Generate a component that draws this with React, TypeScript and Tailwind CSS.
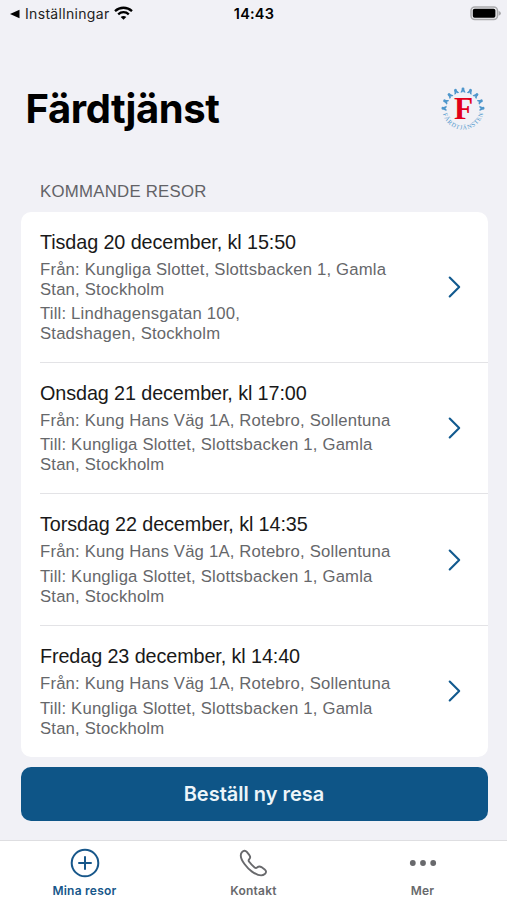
const trips = [
  {
    title: "Tisdag 20 december, kl 15:50",
    from: ["Från: Kungliga Slottet, Slottsbacken 1, Gamla", "Stan, Stockholm"],
    to: ["Till: Lindhagensgatan 100,", "Stadshagen, Stockholm"],
    size: "h-[151px]",
  },
  {
    title: "Onsdag 21 december, kl 17:00",
    from: ["Från: Kung Hans Väg 1A, Rotebro, Sollentuna"],
    to: ["Till: Kungliga Slottet, Slottsbacken 1, Gamla", "Stan, Stockholm"],
    size: "h-[131.5px]",
  },
  {
    title: "Torsdag 22 december, kl 14:35",
    from: ["Från: Kung Hans Väg 1A, Rotebro, Sollentuna"],
    to: ["Till: Kungliga Slottet, Slottsbacken 1, Gamla", "Stan, Stockholm"],
    size: "h-[132px]",
  },
  {
    title: "Fredag 23 december, kl 14:40",
    from: ["Från: Kung Hans Väg 1A, Rotebro, Sollentuna"],
    to: ["Till: Kungliga Slottet, Slottsbacken 1, Gamla", "Stan, Stockholm"],
    size: "h-[130.5px]",
  },
];

const figureAngles = [-88, -66, -44, -22, 0, 22, 44, 66, 88];

function Logo() {
  return (
    <svg width="46" height="46" viewBox="-23 -23 46 46" className="shrink-0">
      <defs>
        <path id="ring" d="M-20.6 0A20.6 20.6 0 0 0 20.6 0" />
      </defs>
      {figureAngles.map((a) => (
        <g key={a} transform={`rotate(${a}) translate(0 -19)`} fill="#4f97cc">
          <circle cy="-1.1" r="1.45" />
          <path d="M-1.1 -.8H1.1L2.6 2.5H.9L0 1.3L-.9 2.5H-2.6Z" />
        </g>
      ))}
      <text fontFamily="Liberation Serif, serif" fontSize="6.2" fill="#4f97cc">
        <textPath href="#ring" startOffset="4.8" textLength="55.2">FÄRDTJÄNSTEN</textPath>
      </text>
      <text x="0.5" y="10.2" textAnchor="middle" fontFamily="Liberation Serif, serif" fontWeight="700" fontSize="31.4" fill="#e2001a">F</text>
    </svg>
  );
}

function Chevron() {
  return (
    <svg width="14" height="22" viewBox="0 0 14 22" fill="none" stroke="#125a8f" strokeWidth="2.1" strokeLinecap="round" strokeLinejoin="round">
      <path d="M1.7 1.5L11.2 11L1.7 20.5" />
    </svg>
  );
}

export default function App() {
  return (
    <div className="flex h-[900px] w-[507px] flex-col overflow-hidden bg-[#f1f1f6] font-['Liberation_Sans',sans-serif]">
      <div className="grid h-7 shrink-0 grid-cols-3 items-center pl-2.5 pr-1.5 text-black">
        <div className="flex items-center whitespace-nowrap font-['Inter',sans-serif] text-[14px] leading-7">
          <svg width="10" height="10" viewBox="0 0 10 10"><path d="M0 5L9.5 .8V9.2Z" /></svg>
          <span className="ml-[5px] tracking-[0.32px] text-[#222]">Inställningar</span>
          <svg width="19" height="15" viewBox="0 0 19 15" className="mb-px ml-[4px]" fill="none" stroke="#000" strokeWidth="2.3">
            <path d="M1 5.1C5.9 .6 13.1 .6 18 5.1" />
            <path d="M4.2 8.3C7.2 5.5 11.8 5.5 14.8 8.3" />
            <path d="M9.5 13.8L6.7 11C8.3 9.5 10.7 9.5 12.3 11Z" fill="#000" stroke="none" />
          </svg>
        </div>
        <div className="pr-[3px] text-center font-['Inter',sans-serif] text-[14.5px] font-semibold tracking-[0.2px]">14:43</div>
        <svg width="31" height="15" viewBox="0 0 31 15" className="mb-[2px] justify-self-end">
          <rect x="1" y="1" width="26.5" height="12.6" rx="3.8" fill="#ededf0" stroke="#aaaaad" strokeWidth="1.5" />
          <rect x="2.8" y="2.8" width="22.6" height="9" rx="1.8" />
          <path d="M28.6 4.7Q31 5.7 31 7.2T28.6 9.8Z" fill="#aaaaad" />
        </svg>
      </div>

      <header className="flex h-[144px] shrink-0 items-center justify-between pl-[25.5px] pr-[21px] pb-[3px] pt-[21px]">
        <h1 className="font-['Inter',sans-serif] text-[40px] font-bold leading-[48px] tracking-[-0.4px] text-black">Färdtjänst</h1>
        <Logo />
      </header>

      <h2 className="h-[39.5px] shrink-0 pl-10 pt-[10px] text-[16.8px] leading-5 tracking-[0.25px] text-[#626266]">KOMMANDE RESOR</h2>

      <main className="ml-[20.5px] mr-[19.5px] shrink-0 rounded-[10px] bg-white pl-[19.5px]">
        {trips.map((trip, i) => (
          <section key={trip.title} className={`flex items-center justify-between pr-[26px] ${trip.size} ${i < 3 ? "border-b border-[#e3e3e6]" : ""}`}>
            <div className="h-full whitespace-nowrap pt-[17px]">
              <h3 className="text-[19.8px] leading-[26px] tracking-[-0.1px] text-[#191919]">{trip.title}</h3>
              <div className="mt-[5px] text-[16.7px] leading-[20px] tracking-[0.19px] text-[#66676a]">
                {trip.from.map((line) => <p key={line}>{line}</p>)}
                <div className="mt-[4.7px]">
                  {trip.to.map((line) => <p key={line}>{line}</p>)}
                </div>
              </div>
            </div>
            <Chevron />
          </section>
        ))}
      </main>

      <button className="ml-[20.5px] mr-[19.5px] mt-[10px] h-[54px] shrink-0 rounded-[10px] bg-[#0e5587] font-['Inter',sans-serif] text-[20px] font-semibold text-[#edf5fa]">Beställ ny resa</button>

      <nav className="mt-auto grid h-[60px] shrink-0 grid-cols-3 border-t border-[#dedee1] bg-white font-['Inter',sans-serif] text-[12px] font-semibold tracking-[0.25px] text-[#68696c]">
        <div className="flex flex-col items-center text-[#17578a]">
          <svg width="30" height="30" viewBox="0 0 30 30" className="mt-[7px]" fill="none" stroke="currentColor" strokeWidth="2" strokeLinecap="round">
            <circle cx="15" cy="15" r="13.3" />
            <path d="M9 15H21M15 9V21" />
          </svg>
          <span className="mt-[5px] leading-4">Mina resor</span>
        </div>
        <div className="flex flex-col items-center">
          <svg width="30" height="30" viewBox="0 0 30 30" className="mt-[7px]" fill="none" stroke="currentColor" strokeWidth="1.9" strokeLinejoin="round">
            <path d="M3 4.1C4.7 2.3 6.4 2.3 7.8 3.9L10.4 7.2C11.6 8.9 11.4 10.1 10.2 11.2C9.3 12.1 9.5 12.9 10.2 13.8C11.8 16 13.5 17.8 15.6 19.4C16.6 20.2 17.4 20.2 18.3 19.3C19.6 18.2 20.9 18.1 22.4 19.1L25.7 21.5C27.5 22.9 27.5 24.6 25.8 26.1C22.6 28.8 18.1 27.2 13 23.6C10.1 21.5 7.6 18.9 5.5 16C1.9 11 .2 7.2 3 4.1Z" />
          </svg>
          <span className="mt-[5px] leading-4">Kontakt</span>
        </div>
        <div className="flex flex-col items-center">
          <svg width="30" height="30" viewBox="0 0 30 30" className="mt-[7px]" fill="currentColor">
            <circle cx="4.8" cy="15" r="2.9" /><circle cx="15" cy="15" r="2.9" /><circle cx="25.2" cy="15" r="2.9" />
          </svg>
          <span className="mt-[5px] leading-4">Mer</span>
        </div>
      </nav>
    </div>
  );
}
